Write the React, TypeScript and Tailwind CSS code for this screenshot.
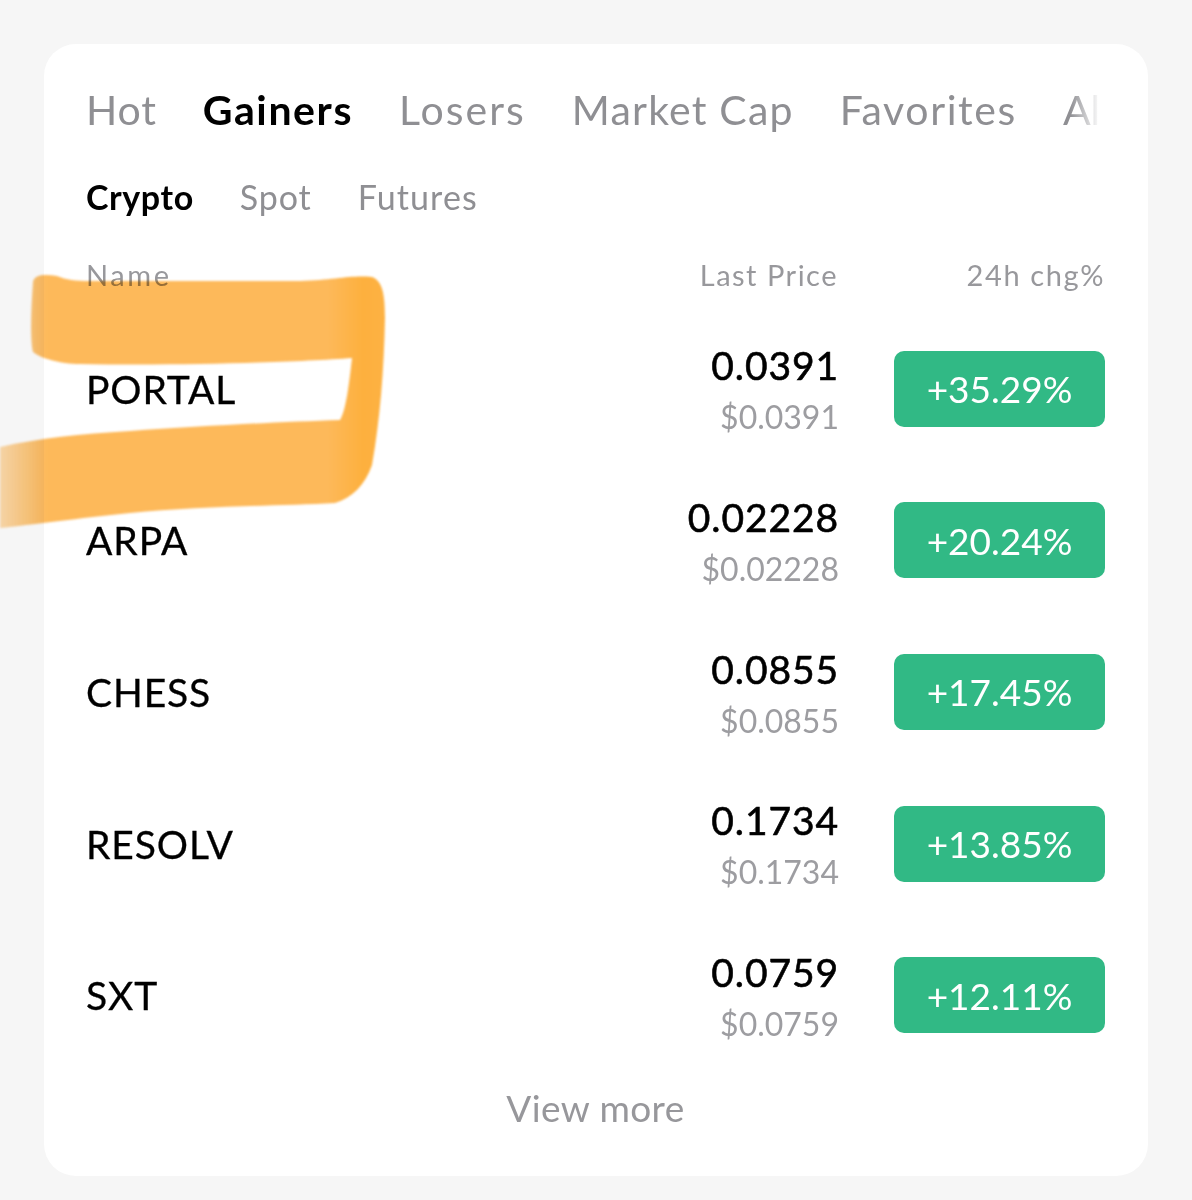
const tabs = [
  { label: "Hot", cls: "font-normal tracking-[0.8px]" },
  { label: "Gainers", cls: "font-bold text-black tracking-[1.6px]" },
  { label: "Losers", cls: "font-normal tracking-[2px]" },
  { label: "Market Cap", cls: "font-normal tracking-[1.2px]" },
  { label: "Favorites", cls: "font-normal tracking-[1.6px]" },
  { label: "Al", cls: "font-normal tracking-[0px]" },
];
const subTabs = [
  { label: "Crypto", cls: "font-bold text-black tracking-[0.6px]" },
  { label: "Spot", cls: "font-normal tracking-[0.9px]" },
  { label: "Futures", cls: "font-normal tracking-[1.1px]" },
];
const rows = [
  { name: "PORTAL", price: "0.0391", usd: "$0.0391", chg: "+35.29%" },
  { name: "ARPA", price: "0.02228", usd: "$0.02228", chg: "+20.24%" },
  { name: "CHESS", price: "0.0855", usd: "$0.0855", chg: "+17.45%" },
  { name: "RESOLV", price: "0.1734", usd: "$0.1734", chg: "+13.85%" },
  { name: "SXT", price: "0.0759", usd: "$0.0759", chg: "+12.11%" },
];

export default function App() {
  return (
    <div className="relative w-[1192px] h-[1200px] overflow-hidden bg-[#f6f6f6] p-[44px] font-['Lato','Liberation_Sans',sans-serif]">
      <div className="w-[1104px] h-[1132px] rounded-[32px] bg-white pl-[42px] pr-[43px] flex flex-col">
        <div className="relative mt-[41px] h-[50px] w-[1014px] flex items-center gap-[46px] whitespace-nowrap text-[41px] text-[#8f8f93]">
          {tabs.map((t) => (
            <span key={t.label} className={t.cls}>{t.label}</span>
          ))}
          <div className="absolute right-0 top-0 h-full w-[30px] bg-gradient-to-r from-transparent to-white" />
        </div>
        <div className="mt-[41px] h-[40px] flex items-center gap-[46px] text-[34px] text-[#8f8f93]">
          {subTabs.map((t) => (
            <span key={t.label} className={t.cls}>{t.label}</span>
          ))}
        </div>
        <div className="mt-[39px] h-[40px] flex items-center text-[29px] text-[#98989c]">
          <span className="flex-1 tracking-[2.6px]">Name</span>
          <span className="tracking-[1.5px]">Last Price</span>
          <span className="w-[267px] text-right tracking-[1.6px]">24h chg%</span>
        </div>
        <div className="mt-[18px] flex flex-col">
          {rows.map((r) => (
            <div key={r.name} className="h-[151.67px] flex items-center">
              <span className="flex-1 text-[39px] tracking-[0.9px] text-black [-webkit-text-stroke:0.3px_black]">{r.name}</span>
              <div className="flex flex-col items-end mr-[55px] pt-[3px]">
                <span className="text-[39px] leading-[44px] tracking-[0.9px] text-black [-webkit-text-stroke:0.6px_black]">{r.price}</span>
                <span className="mt-[10px] text-[32px] leading-[40px] text-[#9d9da1]">{r.usd}</span>
              </div>
              <div className="w-[211px] h-[76px] rounded-[10px] bg-[#31b985] flex items-center justify-center text-white text-[37px]">
                {r.chg}
              </div>
            </div>
          ))}
        </div>
        <div className="mt-[9px] text-center text-[37px] tracking-[0.4px] text-[#97979b]">View more</div>
      </div>
      <svg className="absolute left-0 top-0 pointer-events-none mix-blend-multiply blur-[1px]" width="1192" height="1200" viewBox="0 0 1192 1200">
        <defs>
          <linearGradient id="fade" gradientUnits="userSpaceOnUse" x1="0" x2="390" y1="0" y2="0">
            <stop offset="0" stopColor="#fdb95a" stopOpacity="0.5" />
            <stop offset="0.12" stopColor="#fdb95a" stopOpacity="1" />
            <stop offset="0.84" stopColor="#fdb95a" />
            <stop offset="0.93" stopColor="#fdb03e" />
            <stop offset="1" stopColor="#fdb244" />
          </linearGradient>
        </defs>
        <path
          d="M33 282 C34 274 46 274 57 276 C66 280 76 281 90 281 L300 281 C335 280 350 275 372 277 C382 281 385 292 385 318 C384 370 380 420 372 465 C365 485 352 498 335 503 C280 506 200 506 130 513 C80 518 30 525 0 528 L0 447 C40 438 80 434 130 431 C200 426 280 422 340 420 C346 410 349 385 352 358 C300 362 180 366 80 364 C60 364 40 358 33 352 C30 340 31 310 33 282 Z"
          fill="url(#fade)"
        />
      </svg>
    </div>
  );
}
